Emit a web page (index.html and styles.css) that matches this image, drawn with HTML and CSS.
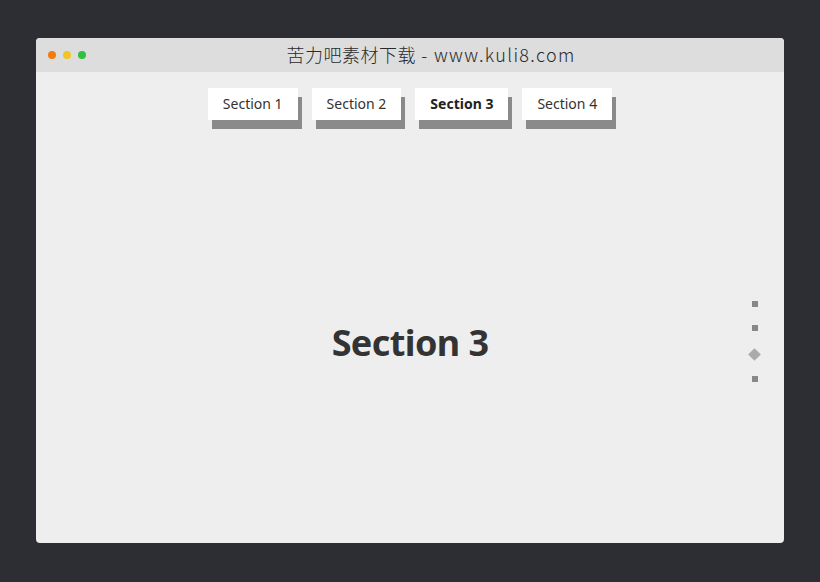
FILE: index.html
```html
<!DOCTYPE html>
<html lang="zh">
<head>
<meta charset="utf-8">
<title>Section 3</title>
<link rel="stylesheet" href="styles.css">
</head>
<body>
<div class="window">
  <div class="titlebar">
    <div class="lights">
      <span class="light orange"></span>
      <span class="light yellow"></span>
      <span class="light green"></span>
    </div>
    <div class="title"><span class="title-cjk">苦力吧素材下载</span><span class="title-latin"> - www.kuli8.com</span></div>
  </div>
  <div class="content">
    <nav class="tabs">
      <a class="tab">Section 1</a>
      <a class="tab">Section 2</a>
      <a class="tab active">Section 3</a>
      <a class="tab">Section 4</a>
    </nav>
    <main class="stage">
      <h1 class="heading">Section 3</h1>
    </main>
    <ul class="pager">
      <li class="pip"></li>
      <li class="pip"></li>
      <li class="pip current"></li>
      <li class="pip"></li>
    </ul>
  </div>
</div>
</body>
</html>
```
FILE: styles.css
```css
html, body {
  margin: 0;
  padding: 0;
  background: #2d2e33;
  height: 100%;
}
body {
  padding: 38px 36px 0;
  box-sizing: border-box;
  font-family: "Noto Sans", "Open Sans", sans-serif;
}
.window {
  width: 748px;
  height: 505px;
  border-radius: 4px;
  overflow: hidden;
  background: #eeeeee;
  display: flex;
  flex-direction: column;
}
.titlebar {
  height: 34px;
  background: #dddddd;
  position: relative;
  display: flex;
  align-items: center;
  justify-content: center;
  padding-left: 42px;
  flex-shrink: 0;
}
.lights {
  position: absolute;
  left: 12px;
  top: 13px;
  display: flex;
  gap: 7px;
}
.light {
  width: 8px;
  height: 8px;
  border-radius: 50%;
  display: block;
}
.orange { background: #f57b0b; }
.yellow { background: #f2c525; }
.green { background: #2fc13b; }
.title {
  color: #2a2a2a;
  line-height: 34px;
  margin-top: -2px;
  white-space: pre;
  font-family: "Noto Sans CJK SC", sans-serif;
  font-weight: 300;
  font-size: 18px;
}
.title-cjk {
  letter-spacing: 0.5px;
}
.title-latin {
  letter-spacing: 1.35px;
}
.content {
  flex: 1;
  position: relative;
  display: flex;
  flex-direction: column;
}
.tabs {
  display: flex;
  justify-content: center;
  gap: 14px;
  padding-top: 16px;
}
.tab {
  display: block;
  background: #fff;
  color: #333;
  font-size: 14px;
  line-height: 32px;
  height: 32px;
  padding: 0 15px;
  box-shadow: 4px 9px 0 #8a8a8a;
}
.tab.active {
  font-weight: 700;
  color: #222;
}
.stage {
  flex: 1;
  display: flex;
  align-items: center;
  justify-content: center;
  padding-top: 22px;
}
.heading {
  margin: 0;
  font-size: 36px;
  font-weight: 700;
  color: #333;
  letter-spacing: -0.6px;
}
.pager {
  position: absolute;
  right: 25px;
  top: 220px;
  margin: 0;
  padding: 0;
  list-style: none;
  display: flex;
  flex-direction: column;
  align-items: center;
}
.pip {
  width: 6px;
  height: 6px;
  background: #888;
  margin: 9px 0;
}
.pip.current {
  width: 9px;
  height: 9px;
  background: #aaa;
  transform: rotate(45deg);
  margin: 10px 0 8px;
}
```
